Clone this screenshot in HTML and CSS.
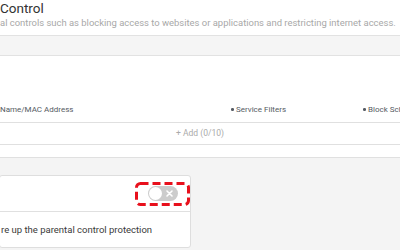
FILE: index.html
```html
<!DOCTYPE html>
<html>
<head>
<meta charset="utf-8">
<link rel="stylesheet" href="styles.css">
</head>
<body>
<div class="page">
  <header class="head">
    <h1 class="title">Control</h1>
    <p class="desc">al controls such as blocking access to websites or applications and restricting internet access.</p>
  </header>
  <div class="band"></div>
  <section class="panel">
    <div class="thead">
      <span class="col">Name/MAC Address</span>
      <span class="col dotted">Service Filters</span>
      <span class="col dotted">Block Schedule</span>
    </div>
    <div class="add-row">+ Add (0/10)</div>
  </section>
  <section class="lower">
    <div class="card">
      <div class="card-head">
        <div class="toggle-wrap">
          <svg class="dash" width="55" height="24" viewBox="0 0 55 24"><rect x="1.5" y="1.5" width="52" height="21" rx="4" ry="4" fill="none" stroke="#e8101c" stroke-width="3" stroke-dasharray="8 4"/></svg>
          <svg class="toggle" width="30" height="15" viewBox="0 0 30 15"><rect x="0" y="0" width="30" height="15" rx="7.5" fill="#cccccc"/><circle cx="7.5" cy="7.5" r="6.5" fill="#ffffff"/><path d="M19 5 L24 10 M24 5 L19 10" stroke="#ffffff" stroke-width="1.6" stroke-linecap="round"/></svg>
        </div>
      </div>
      <div class="card-body">re up the parental control protection</div>
    </div>
  </section>
</div>
</body>
</html>
```

FILE: styles.css
```css
html, body {
  margin: 0;
  padding: 0;
}
body {
  width: 400px;
  height: 250px;
  overflow: hidden;
  background: #ffffff;
  font-family: Roboto, "Liberation Sans", sans-serif;
}
.page {
  width: 400px;
}
.head {
  white-space: nowrap;
}
.title {
  margin: 0;
  font-size: 13.5px;
  line-height: 16px;
  font-weight: 400;
  color: #333333;
}
.desc {
  margin: 1px 0 0;
  font-size: 9.45px;
  line-height: 12px;
  color: #a8a8a8;
}
.band {
  margin-top: 6px;
  height: 19px;
  background: #f5f5f5;
  border-top: 1px solid #e2e2e2;
  border-bottom: 1px solid #e2e2e2;
}
.panel {
  padding: 41px 0 12px;
  border-bottom: 1px solid #e0e0e0;
  background: #ffffff;
}
.thead {
  display: grid;
  grid-template-columns: 231px 132px 1fr;
  align-items: center;
  height: 25px;
  border-bottom: 1px solid #e0e0e0;
  font-size: 8px;
  color: #555b63;
  white-space: nowrap;
}
.col {
  overflow: hidden;
  display: flex;
  align-items: center;
}
.dotted::before {
  content: "";
  width: 2.5px;
  height: 2.5px;
  border-radius: 50%;
  background: #555b63;
  margin-right: 2.5px;
  flex: none;
}
.add-row {
  height: 21px;
  line-height: 21px;
  text-align: center;
  font-size: 8.5px;
  color: #aaaaaa;
  border-bottom: 1px solid #e0e0e0;
}
.lower {
  box-sizing: border-box;
  background: #f4f4f4;
  padding-top: 17px;
  height: 92px;
}
.card {
  margin-left: -1px;
  width: 190px;
  background: #ffffff;
  border: 1px solid #dedede;
  border-radius: 3px;
}
.card-head {
  height: 35px;
  display: flex;
  justify-content: flex-end;
  align-items: center;
  border-bottom: 1px solid #e0e0e0;
}
.toggle-wrap {
  position: relative;
  width: 55px;
  height: 24px;
  display: flex;
  align-items: center;
  justify-content: center;
}
.dash {
  position: absolute;
  left: 0;
  top: 0;
}
.toggle {
  display: block;
  margin-left: 1px;
}
.card-body {
  height: 35px;
  display: flex;
  align-items: center;
  padding-left: 1px;
  font-size: 9.5px;
  line-height: 12px;
  color: #3a3a3a;
  white-space: nowrap;
}
```
